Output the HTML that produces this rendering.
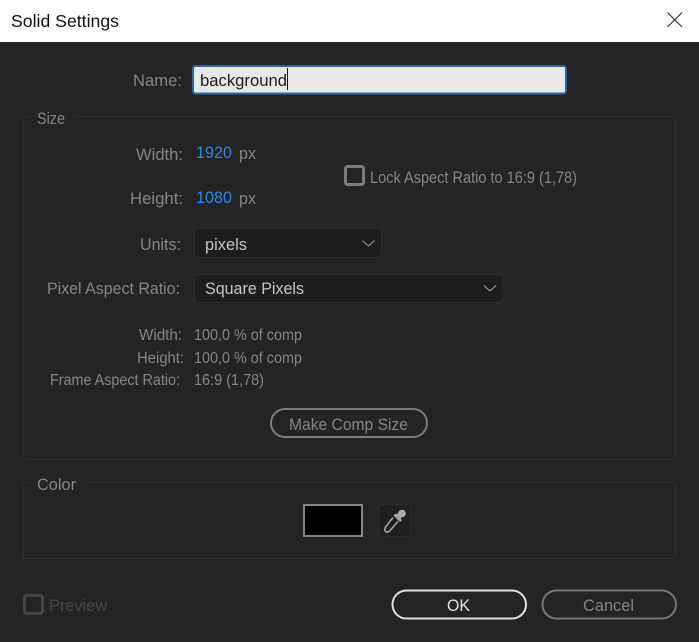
<!DOCTYPE html>
<html>
<head>
<meta charset="utf-8">
<title>Solid Settings</title>
<style>
html,body{margin:0;padding:0;width:699px;height:642px;overflow:hidden;background:#242424}
svg{display:block}
text{font-family:"Liberation Sans",sans-serif;font-size:16.5px;fill:#858585}
.s{font-size:15.500px}
</style>
</head>
<body>
<svg width="699" height="642" viewBox="0 0 699 642" xmlns="http://www.w3.org/2000/svg">
<rect width="699" height="642" fill="#242424"/>
<rect width="699" height="42" fill="#fff"/>
<text x="11" y="27" textLength="108" lengthAdjust="spacingAndGlyphs" style="font-size:17.5px;fill:#111">Solid Settings</text>
<path d="M667.500 12.500L682 27M682 12.500L667.500 27" stroke="#222" stroke-width="1" fill="none"/>

<text x="133" y="86" textLength="49" lengthAdjust="spacingAndGlyphs">Name:</text>
<rect x="193" y="66" width="373" height="27.500" rx="2.500" fill="#e8e8e8" stroke="#2c689f" stroke-width="2"/>
<text x="200" y="86" textLength="87" lengthAdjust="spacingAndGlyphs" style="fill:#1c1c1c">background</text>
<rect x="287" y="68" width="1" height="22" fill="#111"/>

<path d="M30 116.500H26Q23.500 116.500 23.500 119V456.500Q23.500 459.500 26 459.500H672Q675.500 459.500 675.500 456.500V119Q675.500 116.500 672 116.500H75" fill="none" stroke="#303030"/>
<text x="37" y="124" textLength="28" lengthAdjust="spacingAndGlyphs" style="font-size:17px">Size</text>

<text x="136" y="160" textLength="47" lengthAdjust="spacingAndGlyphs">Width:</text>
<text x="196" y="158" textLength="36" lengthAdjust="spacingAndGlyphs" style="fill:#2a8ae8">1920</text>
<text x="239" y="159" textLength="17" lengthAdjust="spacingAndGlyphs">px</text>
<text x="130" y="204" textLength="53" lengthAdjust="spacingAndGlyphs">Height:</text>
<text x="196" y="203" textLength="36" lengthAdjust="spacingAndGlyphs" style="fill:#2a8ae8">1080</text>
<text x="239" y="204" textLength="17" lengthAdjust="spacingAndGlyphs">px</text>

<rect x="345.500" y="166.500" width="18" height="18" rx="2" fill="none" stroke="#7c7c7c" stroke-width="3"/>
<text x="370" y="183" textLength="207" lengthAdjust="spacingAndGlyphs">Lock Aspect Ratio to 16:9 (1,78)</text>

<text x="140" y="250" textLength="41" lengthAdjust="spacingAndGlyphs">Units:</text>
<rect x="194.500" y="228.500" width="187" height="29" rx="3" fill="#1d1d1d" stroke="#2b2b2b"/>
<text x="205" y="250" textLength="42" lengthAdjust="spacingAndGlyphs" style="fill:#c6c6c6">pixels</text>
<path d="M362.500 240.500L368.500 246L374.500 240.500" fill="none" stroke="#a0a0a0" stroke-width="1"/>

<text x="47" y="294" textLength="133" lengthAdjust="spacingAndGlyphs">Pixel Aspect Ratio:</text>
<rect x="194.500" y="274.500" width="308" height="28" rx="3" fill="#1d1d1d" stroke="#2b2b2b"/>
<text x="205" y="294" textLength="99" lengthAdjust="spacingAndGlyphs" style="fill:#c6c6c6">Square Pixels</text>
<path d="M484 285.500L490 291L496 285.500" fill="none" stroke="#a0a0a0" stroke-width="1"/>

<text class="s" x="139" y="340" textLength="43" lengthAdjust="spacingAndGlyphs">Width:</text>
<text class="s" x="194" y="340" textLength="108" lengthAdjust="spacingAndGlyphs">100,0 % of comp</text>
<text class="s" x="137" y="363" textLength="47" lengthAdjust="spacingAndGlyphs">Height:</text>
<text class="s" x="194" y="363" textLength="108" lengthAdjust="spacingAndGlyphs">100,0 % of comp</text>
<text class="s" x="50" y="385" textLength="130" lengthAdjust="spacingAndGlyphs">Frame Aspect Ratio:</text>
<text class="s" x="194" y="385" textLength="70" lengthAdjust="spacingAndGlyphs">16:9 (1,78)</text>

<rect x="271" y="409" width="156" height="28" rx="14" fill="none" stroke="#7c7c7c" stroke-width="2"/>
<text x="289" y="430" textLength="119" lengthAdjust="spacingAndGlyphs">Make Comp Size</text>

<path d="M30 482.500H26Q23.500 482.500 23.500 485V555.500Q23.500 558.500 26 558.500H672Q675.500 558.500 675.500 555.500V485Q675.500 482.500 672 482.500H89" fill="none" stroke="#303030"/>
<text x="37" y="490" textLength="39" lengthAdjust="spacingAndGlyphs" style="font-size:17px">Color</text>

<rect x="304" y="505" width="58" height="31" fill="#000" stroke="#858585" stroke-width="2"/>
<rect x="378.500" y="504.500" width="32" height="32" rx="3" fill="#1f1f1f" stroke="#2b2b2b"/>
<path d="M393 517.500L385.500 527Q384 530 385.500 531.500Q387.500 533 390 530.500L398 521.500" fill="none" stroke="#a8a8a8" stroke-width="1.500"/>
<circle cx="402" cy="513.500" r="3.800" fill="#a8a8a8"/>
<path d="M394.500 514.500L401 521" stroke="#a8a8a8" stroke-width="3" fill="none"/>
<path d="M397 514L401 518" stroke="#a8a8a8" stroke-width="5" fill="none"/>

<rect x="24.500" y="595.500" width="18" height="18" rx="2" fill="none" stroke="#444" stroke-width="3"/>
<text x="49" y="611" textLength="58" lengthAdjust="spacingAndGlyphs" style="fill:#454545">Preview</text>

<rect x="392.500" y="590.500" width="133.500" height="28" rx="14" fill="none" stroke="#e0e0e0" stroke-width="2"/>
<text x="447" y="611" textLength="23" lengthAdjust="spacingAndGlyphs" style="fill:#e4e4e4">OK</text>
<rect x="542.500" y="590.500" width="133.500" height="28" rx="14" fill="none" stroke="#767676" stroke-width="2"/>
<text x="583" y="611" textLength="51" lengthAdjust="spacingAndGlyphs">Cancel</text>
</svg>
</body>
</html>
